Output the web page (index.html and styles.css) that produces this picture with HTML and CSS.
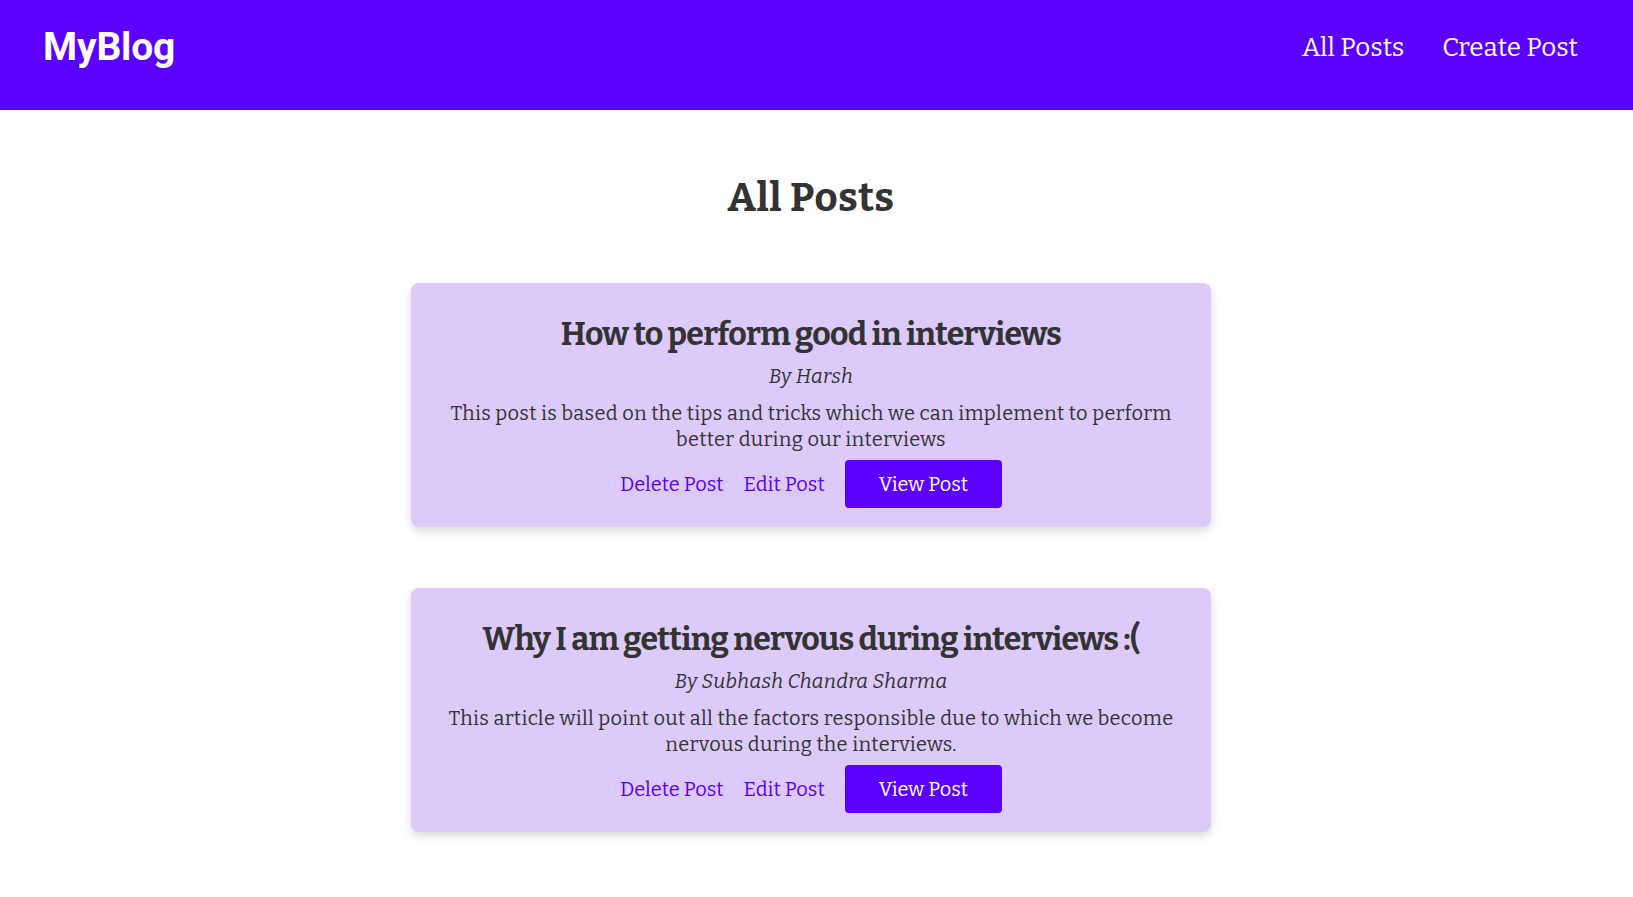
FILE: index.html
```html
<!DOCTYPE html>
<html>
<head>
<meta charset="utf-8">
<title>MyBlog</title>
<link rel="stylesheet" href="styles.css">
</head>
<body>
<header class="topbar">
  <a class="logo" href="#">MyBlog</a>
  <nav class="nav">
    <a class="nav-link" href="#">All Posts</a>
    <a class="nav-link" href="#">Create Post</a>
  </nav>
</header>
<main class="main">
  <h1 class="page-title">All Posts</h1>
  <div class="posts">
    <article class="card">
      <h2 class="card-title">How to perform good in interviews</h2>
      <p class="card-author">By Harsh</p>
      <p class="card-text">This post is based on the tips and tricks which we can implement to perform better during our interviews</p>
      <div class="card-actions">
        <a class="action-link" href="#">Delete Post</a>
        <a class="action-link" href="#">Edit Post</a>
        <a class="btn" href="#">View Post</a>
      </div>
    </article>
    <article class="card">
      <h2 class="card-title">Why I am getting nervous during interviews :(</h2>
      <p class="card-author">By Subhash Chandra Sharma</p>
      <p class="card-text">This article will point out all the factors responsible due to which we become nervous during the interviews.</p>
      <div class="card-actions">
        <a class="action-link" href="#">Delete Post</a>
        <a class="action-link" href="#">Edit Post</a>
        <a class="btn" href="#">View Post</a>
      </div>
    </article>
  </div>
</main>
</body>
</html>
```
FILE: styles.css
```css
* { box-sizing: border-box; }

body {
  margin: 0;
  font-family: "Bitter", "DejaVu Serif", serif;
  font-size: 20px;
  color: #333333;
  background: #ffffff;
}

a { text-decoration: none; }

.topbar {
  height: 110px;
  background: #5b00ff;
  display: flex;
  align-items: center;
  justify-content: space-between;
  padding: 0 55px 16px 43px;
}

.logo {
  font-family: "Roboto", "Liberation Sans", sans-serif;
  font-weight: 700;
  font-size: 39px;
  color: #ffffff;
  letter-spacing: -0.2px;
}

.nav {
  display: flex;
  gap: 38px;
}

.nav-link {
  color: #ffffff;
  font-size: 26px;
}

.main {
  padding: 64px 11px 60px 0;
  display: flex;
  flex-direction: column;
  align-items: center;
}

.page-title {
  margin: 0 0 61px;
  font-size: 40px;
  line-height: 48px;
  font-weight: 700;
  letter-spacing: 0.5px;
  color: #333333;
}

.posts {
  display: flex;
  flex-direction: column;
  gap: 61px;
}

.card {
  width: 800px;
  background: #dccbfa;
  border-radius: 8px;
  box-shadow: 0 4px 10px rgba(0, 0, 0, 0.15);
  padding: 31px 20px 19px;
  text-align: center;
}

.card-title {
  margin: 0;
  font-size: 32px;
  line-height: 40px;
  font-weight: 700;
  letter-spacing: -0.7px;
}

.card-author {
  margin: 10px 0 0;
  font-style: italic;
  line-height: 24px;
  letter-spacing: 0.3px;
}

.card-text {
  margin: 12px 0 0;
  line-height: 26px;
  letter-spacing: 0.3px;
}

.card-actions {
  margin-top: 8px;
  display: flex;
  justify-content: center;
  align-items: center;
  gap: 20px;
}

.action-link {
  color: #5b00ff;
  line-height: 24px;
}

.btn {
  display: inline-flex;
  align-items: center;
  height: 48px;
  padding: 0 34px;
  background: #5b00ff;
  color: #ffffff;
  border-radius: 4px;
  line-height: 24px;
}
```
